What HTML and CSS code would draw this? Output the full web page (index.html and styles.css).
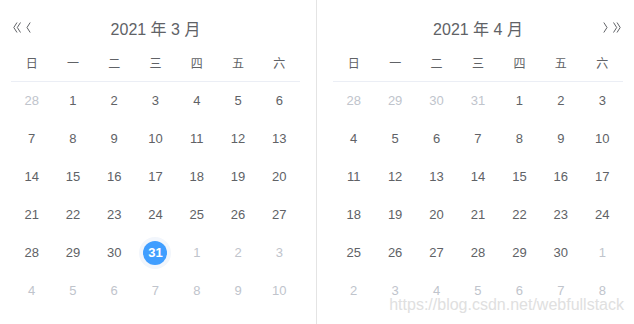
FILE: index.html
```html
<!DOCTYPE html>
<html lang="zh-CN">
<head>
    <meta charset="UTF-8">
    <meta name="viewport" content="width=device-width, initial-scale=1.0">
    <title>日期范围</title>
    <link rel="stylesheet" href="styles.css">
</head>
<body>
    <div class="range-picker">
        <div class="panel panel-left">
            <div class="panel-header">
                <div class="arrows">
                    <svg class="arrow" width="8" height="11" viewBox="0 0 8 11"><path d="M4 0.5 L0.8 5.5 L4 10.5 M7.5 0.5 L4.3 5.5 L7.5 10.5"/></svg>
                    <svg class="arrow" width="5" height="11" viewBox="0 0 5 11"><path d="M4.2 0.5 L1 5.5 L4.2 10.5"/></svg>
                </div>
                <div class="title">2021 年 3 月</div>
                <div></div>
            </div>
            <table class="date-table" id="march"></table>
        </div>
        <div class="panel panel-right">
            <div class="panel-header">
                <div></div>
                <div class="title">2021 年 4 月</div>
                <div class="arrows arrows-right">
                    <svg class="arrow" width="5" height="11" viewBox="0 0 5 11"><path d="M0.8 0.5 L4 5.5 L0.8 10.5"/></svg>
                    <svg class="arrow" width="8" height="11" viewBox="0 0 8 11"><path d="M0.5 0.5 L3.7 5.5 L0.5 10.5 M4 0.5 L7.2 5.5 L4 10.5"/></svg>
                </div>
            </div>
            <table class="date-table" id="april"></table>
        </div>
        <div class="watermark">https://blog.csdn.net/webfullstack</div>
    </div>

    <script>
        const weekdays = ['日', '一', '二', '三', '四', '五', '六'];

        function renderMonth(table, year, month, selected) {
            const first = new Date(year, month - 1, 1);
            const start = new Date(year, month - 1, 1 - first.getDay());
            let html = '<tr>' + weekdays.map(d => `<th>${d}</th>`).join('') + '</tr>';
            for (let r = 0; r < 6; r++) {
                html += '<tr>';
                for (let c = 0; c < 7; c++) {
                    const day = new Date(start);
                    day.setDate(start.getDate() + r * 7 + c);
                    const inMonth = day.getMonth() === month - 1;
                    let cls = inMonth ? 'available' : 'other';
                    if (inMonth && day.getDate() === selected) cls += ' current';
                    html += `<td class="${cls}"><span class="cell">${day.getDate()}</span></td>`;
                }
                html += '</tr>';
            }
            table.innerHTML = html;
        }

        renderMonth(document.getElementById('march'), 2021, 3, 31);
        renderMonth(document.getElementById('april'), 2021, 4, 0);
    </script>
</body>
</html>
```

FILE: styles.css
```css
body {
    margin: 0;
    background: #fff;
    font-family: "Liberation Sans", "Noto Sans CJK SC", sans-serif;
    color: #606266;
}
.range-picker {
    position: relative;
    display: flex;
    width: 634px;
    height: 324px;
    overflow: hidden;
}
.panel {
    width: 316px;
    box-sizing: border-box;
    padding-top: 16px;
}
.panel-left {
    padding-left: 11px;
    padding-right: 16px;
}
.panel-right {
    width: 318px;
    border-left: 1px solid #e4e4e4;
    padding-left: 16px;
    padding-right: 11px;
}
.panel-header {
    display: grid;
    grid-template-columns: 1fr auto 1fr;
    align-items: center;
    height: 28px;
}
.title {
    font-size: 16px;
    line-height: 28px;
}
.arrows {
    display: flex;
    align-items: center;
    gap: 5px;
    padding-left: 2px;
    margin-top: -6px;
}
.arrows-right {
    justify-content: flex-end;
    padding-left: 0;
    padding-right: 2px;
}
.arrow path {
    fill: none;
    stroke: #606266;
    stroke-width: 1;
}
.date-table {
    width: 100%;
    border-collapse: collapse;
    table-layout: fixed;
    font-size: 13px;
}
.date-table th {
    height: 37px;
    padding: 0;
    font-weight: normal;
    font-size: 12px;
    color: #606266;
    border-bottom: 1px solid #ebeef5;
    text-align: center;
}
.date-table td {
    height: 38px;
    padding: 0;
    text-align: center;
}
.date-table td.other {
    color: #c0c4cc;
}
.cell {
    display: inline-block;
    width: 24px;
    height: 24px;
    line-height: 24px;
    border-radius: 50%;
}
.date-table td.current .cell {
    background: #409eff;
    color: #fff;
    font-weight: bold;
    box-shadow: 0 0 0 4px #f2f6fc;
}
.watermark {
    position: absolute;
    right: 10px;
    bottom: 10px;
    font-size: 16px;
    color: #e0e0e0;
    pointer-events: none;
}
```
